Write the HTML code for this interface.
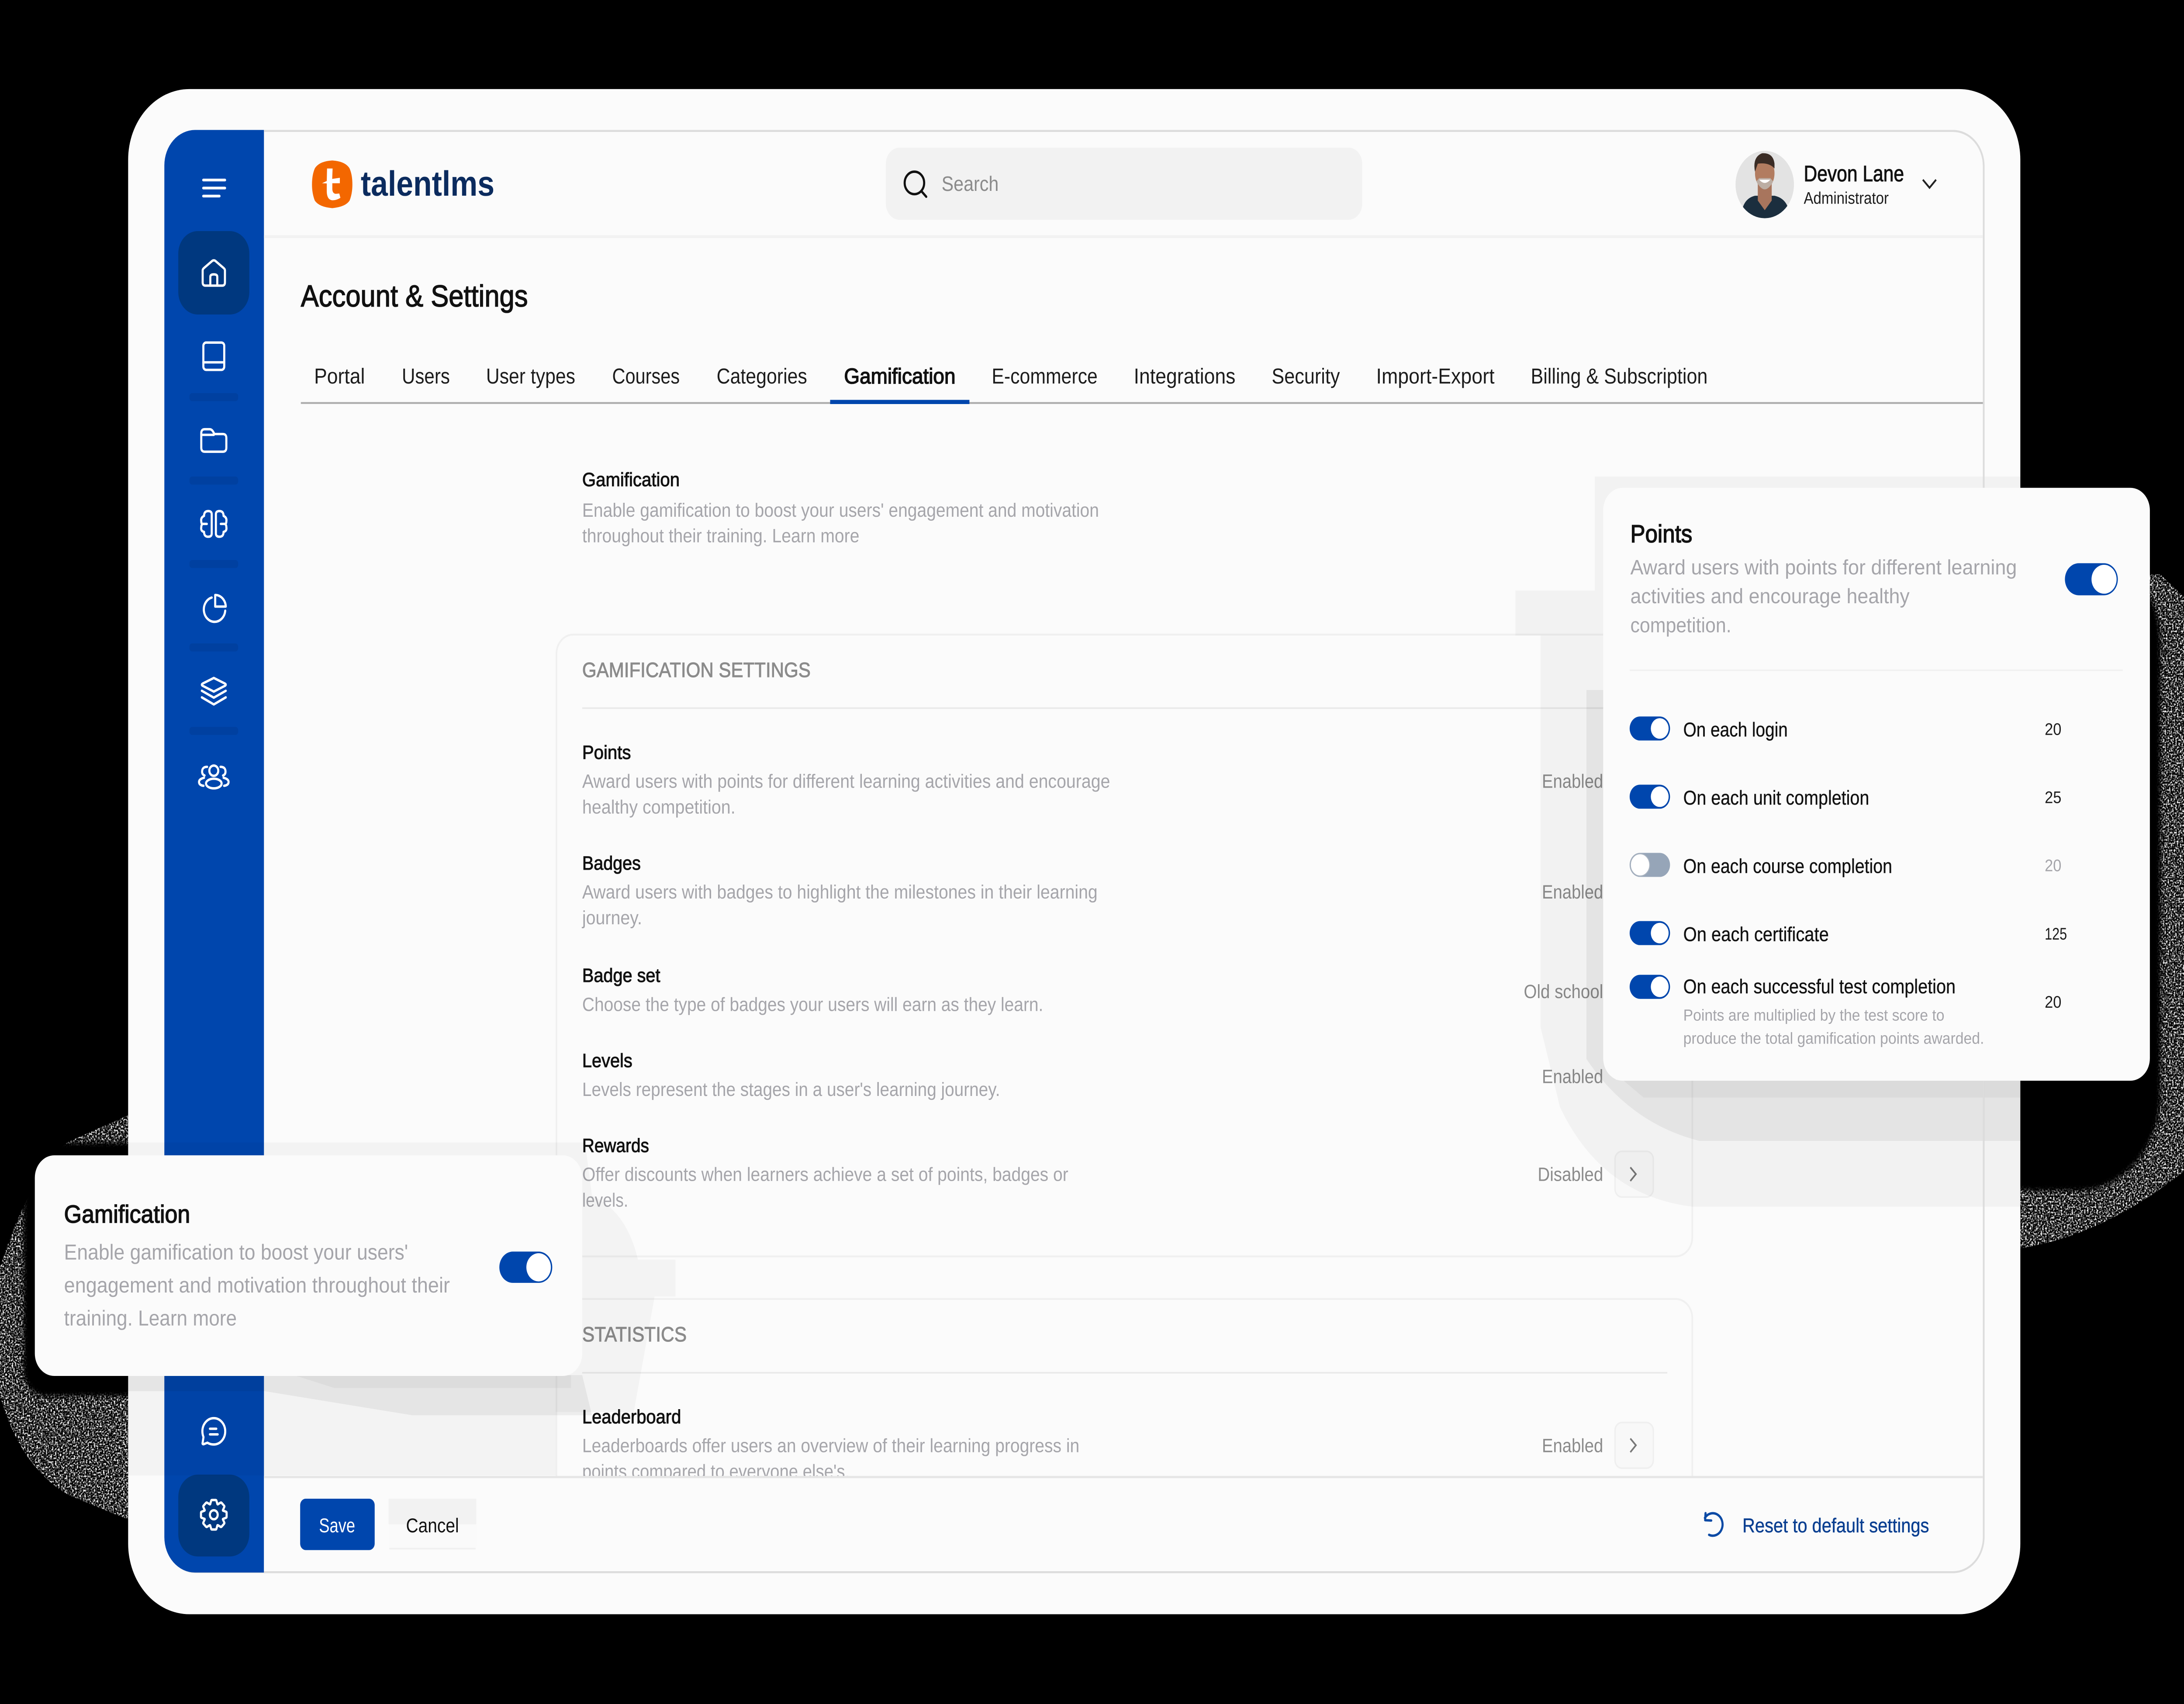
<!DOCTYPE html>
<html lang="en"><head><meta charset="utf-8"><title>TalentLMS Gamification Settings</title>
<style>
html,body{margin:0;padding:0;background:#000;width:100%;height:100%;overflow:hidden}
svg{display:block;position:absolute;left:0;top:0;width:100vw;height:100vh}
text{font-family:"Liberation Sans",sans-serif;fill:#1c1c1c;text-rendering:geometricPrecision;white-space:pre}
.m{stroke:#111;stroke-width:.3;fill:#111}
.t{stroke:#111;stroke-width:.45;fill:#111}
.d{fill:#a5a5aa}
.s{fill:#8b8b8b}
.h{fill:#8b8b8b;stroke:#8b8b8b;stroke-width:.3}
.ic{fill:none;stroke:#fff;stroke-width:1.5;stroke-linecap:round;stroke-linejoin:round}
</style></head><body>
<svg xmlns="http://www.w3.org/2000/svg" viewBox="0 0 1568 1061.94" preserveAspectRatio="none">
<defs>
<filter id="n" x="0" y="0" width="1" height="1" color-interpolation-filters="sRGB">
<feTurbulence type="fractalNoise" baseFrequency="0.9" numOctaves="2" seed="4" result="t"/>
<feColorMatrix in="t" type="matrix" values="3.5 0 0 0 -1.55  3.5 0 0 0 -1.55  3.5 0 0 0 -1.55  0 0 0 0 1" result="c"/>
<feComposite in="c" in2="SourceGraphic" operator="in"/>
</filter>
<filter id="b" x="-20%" y="-20%" width="140%" height="140%"><feGaussianBlur stdDeviation="1.5"/></filter>
<clipPath id="fr"><rect x="92" y="55.5" width="1358.5" height="950.5" rx="44"/></clipPath>
<clipPath id="av"><circle cx="1267" cy="115" r="21"/></clipPath>
<path id="t" d="M-2.6,-6.6 L-1.9,-8.7 Q-1.8,-9.2 -1.2,-9.2 H1.2 Q1.8,-9.2 1.9,-8.7 L2.6,-6.6 L2.9,-6.5"/>
</defs>

<rect width="1568" height="1061.94" fill="#000"/>

<!-- dithered glows -->
<path d="M92,695 L48,712 Q20,735 0,790 L0,870 Q15,915 50,932 L92,947 Z" fill="#fff" filter="url(#n)"/>
<path d="M1551,358 L1568,372 L1568,730 Q1510,770 1450,778 L1440,778 L1440,358 Z" fill="#fff" filter="url(#n)"/>
<rect x="17" y="712" width="110" height="158" rx="16" fill="#000" filter="url(#b)"/>
<rect x="1400" y="340" width="151" height="402" rx="60" fill="#000" filter="url(#b)"/>

<!-- device frame -->
<rect x="92" y="55.5" width="1358.5" height="950.5" rx="44" fill="#fbfbfb"/>
<rect x="118.6" y="81.6" width="1305.6" height="898.2" rx="22" fill="#fbfbfb" stroke="#dcdcdc" stroke-width="1.2"/>

<!-- sidebar -->
<path d="M189.5,81 H140 A22,22 0 0 0 118,103 V958 A22,22 0 0 0 140,980 H189.5 Z" fill="#0046ad"/>
<rect x="128" y="144" width="51" height="52" rx="14" fill="#00387f"/>
<rect x="128" y="919" width="51" height="51" rx="14" fill="#00387f"/>
<g fill="#0040a0">
<rect x="136" y="245" width="35" height="5" rx="2"/>
<rect x="136" y="297" width="35" height="5" rx="2"/>
<rect x="136" y="349" width="35" height="5" rx="2"/>
<rect x="136" y="401" width="35" height="5" rx="2"/>
<rect x="136" y="453" width="35" height="5" rx="2"/>
</g>

<!-- header -->
<rect x="189.5" y="146.6" width="1234" height="1.8" fill="#f2f2f2"/>
<path d="M226,105 Q229,100.5 238.5,100 Q248,100.5 251,105 Q253,109 253,115 Q253,120.5 251,125 Q248,129 238.5,129.7 Q229,129 226,125 Q224,120.5 224,115 Q224,109 226,105 Z" fill="#f36700"/>
<path d="M234.8,105 H238.8 L238.5,111.5 L244,110.8 V114.2 H238.6 V118 Q238.8,120.6 241,120.8 L243.6,120.6 L244.4,123.3 Q241,125 238.5,124.8 Q234.6,124.5 234.6,119 V114.3 L231.2,114.2 L234.6,112.8 Z" fill="#fff"/>
<text x="259" y="122" font-size="22" font-weight="700" textLength="96" lengthAdjust="spacingAndGlyphs" style="fill:#0b2b5e">talentlms</text>

<rect x="636" y="92" width="342" height="45" rx="10" fill="#f2f2f2"/>
<circle cx="656.5" cy="114" r="7" fill="none" stroke="#111" stroke-width="1.5"/>
<path d="M661.6,119.2 L665,122.6" stroke="#111" stroke-width="1.5" stroke-linecap="round"/>
<text x="676" y="119" font-size="13" class="s" textLength="41" lengthAdjust="spacingAndGlyphs">Search</text>

<g clip-path="url(#av)">
<circle cx="1267" cy="115" r="21" fill="#e3e3e3"/>
<path d="M1250,137 Q1250,124 1260,122 L1274,122 Q1285,124 1285,137 Z" fill="#1b2e3e"/>
<path d="M1262,112 H1272 V125 L1267,131 L1262,125 Z" fill="#a8755d"/>
<ellipse cx="1267" cy="108" rx="7" ry="9.5" fill="#b27c60"/>
<path d="M1260,107 Q1258,98 1265,95.5 Q1273,95 1274,102 L1274,105 Q1270,101 1262,102 Z" fill="#3a2c25"/>
<path d="M1261,113 Q1267,123 1273,113 L1271,111 H1263 Z" fill="#bcaea4"/>
<path d="M1263,112 Q1267,116 1271,112 Z" fill="#fff"/>
</g>
<text x="1295" y="113" font-size="14" class="m" textLength="72" lengthAdjust="spacingAndGlyphs">Devon Lane</text>
<text x="1295" y="127" font-size="10.5" textLength="61" lengthAdjust="spacingAndGlyphs">Administrator</text>
<path d="M1380.5,112 L1385.3,117 L1390,112" fill="none" stroke="#222" stroke-width="1.2"/>

<!-- title + tabs -->
<text x="216" y="191" font-size="19" class="t" textLength="163" lengthAdjust="spacingAndGlyphs">Account &amp; Settings</text>
<g font-size="13.5">
<text x="225.5" y="239" textLength="36.5" lengthAdjust="spacingAndGlyphs">Portal</text>
<text x="288.5" y="239" textLength="34.5" lengthAdjust="spacingAndGlyphs">Users</text>
<text x="349" y="239" textLength="64" lengthAdjust="spacingAndGlyphs">User types</text>
<text x="439.5" y="239" textLength="48.5" lengthAdjust="spacingAndGlyphs">Courses</text>
<text x="514.5" y="239" textLength="65" lengthAdjust="spacingAndGlyphs">Categories</text>
<text x="606" y="239" class="t" textLength="80" lengthAdjust="spacingAndGlyphs">Gamification</text>
<text x="712" y="239" textLength="76" lengthAdjust="spacingAndGlyphs">E-commerce</text>
<text x="814" y="239" textLength="73" lengthAdjust="spacingAndGlyphs">Integrations</text>
<text x="913" y="239" textLength="49" lengthAdjust="spacingAndGlyphs">Security</text>
<text x="988" y="239" textLength="85" lengthAdjust="spacingAndGlyphs">Import-Export</text>
<text x="1099" y="239" textLength="127" lengthAdjust="spacingAndGlyphs">Billing &amp; Subscription</text>
</g>
<rect x="216" y="250.6" width="1208" height="1.1" fill="#a9a9a9"/>
<rect x="596" y="249.2" width="100" height="2.6" fill="#0046ad"/>

<!-- gamification block -->
<text x="418" y="303" font-size="12" class="m" textLength="70" lengthAdjust="spacingAndGlyphs">Gamification</text>
<text x="418" y="322" font-size="12" class="d" textLength="371" lengthAdjust="spacingAndGlyphs">Enable gamification to boost your users' engagement and motivation</text>
<text x="418" y="338" font-size="12" class="d" textLength="199" lengthAdjust="spacingAndGlyphs">throughout their training. Learn more</text>

<!-- section cards -->
<rect x="399.5" y="395.5" width="815.5" height="387.5" rx="12" fill="none" stroke="#f0f0f0" stroke-width="1.2"/>
<rect x="399.5" y="809.5" width="815.5" height="140" rx="12" fill="none" stroke="#f0f0f0" stroke-width="1.2"/>
<text x="418" y="422" font-size="13" class="h" textLength="164" lengthAdjust="spacingAndGlyphs">GAMIFICATION SETTINGS</text>
<rect x="418" y="440.8" width="779" height="1" fill="#e9e9e9"/>

<text x="418" y="473" font-size="12" class="m" textLength="35" lengthAdjust="spacingAndGlyphs">Points</text>
<text x="418" y="491" font-size="12" class="d" textLength="379" lengthAdjust="spacingAndGlyphs">Award users with points for different learning activities and encourage</text>
<text x="418" y="507" font-size="12" class="d" textLength="110" lengthAdjust="spacingAndGlyphs">healthy competition.</text>
<text x="1107" y="491" font-size="12" class="s" textLength="44" lengthAdjust="spacingAndGlyphs">Enabled</text>

<text x="418" y="542" font-size="12" class="m" textLength="42" lengthAdjust="spacingAndGlyphs">Badges</text>
<text x="418" y="560" font-size="12" class="d" textLength="370" lengthAdjust="spacingAndGlyphs">Award users with badges to highlight the milestones in their learning</text>
<text x="418" y="576" font-size="12" class="d" textLength="43" lengthAdjust="spacingAndGlyphs">journey.</text>
<text x="1107" y="560" font-size="12" class="s" textLength="44" lengthAdjust="spacingAndGlyphs">Enabled</text>

<text x="418" y="612" font-size="12" class="m" textLength="56" lengthAdjust="spacingAndGlyphs">Badge set</text>
<text x="418" y="630" font-size="12" class="d" textLength="331" lengthAdjust="spacingAndGlyphs">Choose the type of badges your users will earn as they learn.</text>
<text x="1094" y="622" font-size="12" class="s" textLength="57" lengthAdjust="spacingAndGlyphs">Old school</text>

<text x="418" y="665" font-size="12" class="m" textLength="36" lengthAdjust="spacingAndGlyphs">Levels</text>
<text x="418" y="683" font-size="12" class="d" textLength="300" lengthAdjust="spacingAndGlyphs">Levels represent the stages in a user's learning journey.</text>
<text x="1107" y="675" font-size="12" class="s" textLength="44" lengthAdjust="spacingAndGlyphs">Enabled</text>

<text x="418" y="718" font-size="12" class="m" textLength="48" lengthAdjust="spacingAndGlyphs">Rewards</text>
<text x="418" y="736" font-size="12" class="d" textLength="349" lengthAdjust="spacingAndGlyphs">Offer discounts when learners achieve a set of points, badges or</text>
<text x="418" y="752" font-size="12" class="d" textLength="33" lengthAdjust="spacingAndGlyphs">levels.</text>
<text x="1104" y="736" font-size="12" class="s" textLength="47" lengthAdjust="spacingAndGlyphs">Disabled</text>
<rect x="1159.5" y="717.5" width="27.5" height="28.5" rx="5" fill="#f8f8f8" stroke="#efefef"/>
<path d="M1170.5,727.5 L1174.5,731.7 L1170.5,736" fill="none" stroke="#777" stroke-width="1.1"/>

<text x="418" y="836" font-size="13" class="h" textLength="75" lengthAdjust="spacingAndGlyphs">STATISTICS</text>
<rect x="418" y="855" width="779" height="1" fill="#e9e9e9"/>
<text x="418" y="887" font-size="12" class="m" textLength="71" lengthAdjust="spacingAndGlyphs">Leaderboard</text>
<text x="418" y="905" font-size="12" class="d" textLength="357" lengthAdjust="spacingAndGlyphs">Leaderboards offer users an overview of their learning progress in</text>
<text x="418" y="921" font-size="12" class="d" textLength="192" lengthAdjust="spacingAndGlyphs">points compared to everyone else's.</text>
<text x="1107" y="905" font-size="12" class="s" textLength="44" lengthAdjust="spacingAndGlyphs">Enabled</text>
<rect x="1159.5" y="886.5" width="27.5" height="28.5" rx="5" fill="#f8f8f8" stroke="#efefef"/>
<path d="M1170.5,896.5 L1174.5,900.7 L1170.5,905" fill="none" stroke="#777" stroke-width="1.1"/>

<!-- footer -->
<path d="M189.5,920 H1423.6 V958 A21,21 0 0 1 1402,979.2 H189.5 Z" fill="#fbfbfb"/>
<rect x="189.5" y="919.8" width="1234" height="1.4" fill="#e6e6e6"/>

<!-- shadows, clipped to device -->
<g clip-path="url(#fr)">
<path d="M1145,297 H1451 V752 H1215 Q1150,745 1120,690 L1106,640 V396 H1088 V368 H1145 Z" fill="#000" opacity=".036"/>
<path d="M1139,430 H1160 V673 H1451 V711 H1220 Q1170,700 1139,660 Z" fill="#000" opacity=".055"/>
<path d="M1165,673 H1451 V684 H1180 Z" fill="#000" opacity=".035"/>
<path d="M92,712 H420 L425,745 Q450,755 458,785 H485 V808 H470 L455,880 H399 V919.5 H92 Z" fill="#000" opacity=".03"/>
<path d="M92,857 H418 L425,882 H296 L190,867 H92 Z" fill="#000" opacity=".055"/>
<path d="M211,857 H410 V865 H240 Z" fill="#000" opacity=".035"/>
</g>

<!-- footer controls -->
<rect x="215.5" y="934" width="53.5" height="32" rx="4" fill="#0046ad"/>
<text x="229" y="955" font-size="12.5" textLength="26" lengthAdjust="spacingAndGlyphs" style="fill:#fff">Save</text>
<rect x="279" y="934" width="63" height="32" rx="3" fill="#fafafa"/>
<rect x="279" y="934" width="63" height="16" fill="#f2f2f2"/>
<rect x="279.5" y="964.6" width="62" height="1" fill="#f0f0f0"/>
<text x="291.5" y="955" font-size="12.5" textLength="38" lengthAdjust="spacingAndGlyphs" style="fill:#111">Cancel</text>
<path d="M1224,946 A7,7 0 1 1 1227,956.5" fill="none" stroke="#0b4aa5" stroke-width="1.5" stroke-linecap="round"/>
<path d="M1224.5,943 L1224.2,947.4 L1228.6,947.6" fill="none" stroke="#0b4aa5" stroke-width="1.5" stroke-linecap="round" stroke-linejoin="round"/>
<text x="1251" y="955" font-size="12.5" textLength="134" lengthAdjust="spacingAndGlyphs" style="fill:#0a3f91;stroke:#0a3f91;stroke-width:.15">Reset to default settings</text>

<!-- frame border redraw -->
<path d="M189.5,81.6 H1402 A22,22 0 0 1 1424.2,103.6 V958 A22,22 0 0 1 1402,979.8 H189.5" fill="none" stroke="#dcdcdc" stroke-width="1.2"/>

<!-- sidebar icons -->
<g class="ic">
<path d="M146,112.2 H161.5 M146,117.2 H161.5 M146,122.2 H157.5" stroke-width="1.7"/>
<g transform="translate(153.5,170)">
<path d="M-8,-1.5 Q-8,-2.3 -7,-3 L-1,-7.5 Q0,-8 1,-7.5 L7,-3 Q8,-2.3 8,-1.5 V6 Q8,8 6,8 H-6 Q-8,8 -8,6 Z"/>
<path d="M-2.5,8 V2.5 Q-2.5,1 0,1 Q2.5,1 2.5,2.5 V8"/>
</g>
<g transform="translate(153.5,222)">
<rect x="-7.5" y="-8.5" width="15" height="17" rx="2"/>
<path d="M-7.5,3.8 H7.5"/>
</g>
<g transform="translate(153.5,274.5)">
<path d="M-9,-3.5 V-4.5 Q-9,-7 -6.5,-7 H-3 Q-1.5,-7 -0.5,-5.5 L0.5,-4 H6.5 Q9,-4 9,-1.5 V4.5 Q9,7 6.5,7 H-6.5 Q-9,7 -9,4.5 Z"/>
<path d="M-9,-3.5 H0"/>
</g>
<g transform="translate(153.5,326.5)">
<path d="M-1.5,-6 Q-1.5,-8 -4,-8 Q-7,-8 -7,-5 Q-9.5,-4 -9,-1.5 Q-9,0 -8,0 Q-9,0.5 -9,2 Q-9.5,4.5 -7,5 Q-7,8 -4,8 Q-1.5,8 -1.5,6 Z"/>
<path d="M1.5,-6 Q1.5,-8 4,-8 Q7,-8 7,-5 Q9.5,-4 9,-1.5 Q9,0 8,0 Q9,0.5 9,2 Q9.5,4.5 7,5 Q7,8 4,8 Q1.5,8 1.5,6 Z"/>
<path d="M-8,0 H-5 M8,0 H5"/>
</g>
<g transform="translate(153.5,379)">
<path d="M-1.5,-6.6 A7.7,7.7 0 1 0 8.2,1.6"/>
<path d="M1,-8.2 A7.6,7.6 0 0 1 8.6,-1 H1 Z"/>
</g>
<g transform="translate(153.5,431)">
<path d="M0,-8.5 L8,-5 Q9.2,-4.3 8,-3.6 L0,0 L-8,-3.6 Q-9.2,-4.3 -8,-5 Z"/>
<path d="M-8.6,-0.5 L0,3.8 L8.6,-0.5"/>
<path d="M-8.6,3.6 L0,8 L8.6,3.6"/>
</g>
<g transform="translate(153.5,483.5)">
<circle cx="0" cy="-3.2" r="3.2"/>
<ellipse cx="0" cy="4.8" rx="5.6" ry="3"/>
<path d="M-4.8,-5.6 Q-8.4,-5.6 -8.4,-2.6 Q-8.4,-0.8 -6.6,-0.2"/>
<path d="M4.8,-5.6 Q8.4,-5.6 8.4,-2.6 Q8.4,-0.8 6.6,-0.2"/>
<path d="M-7,1.2 Q-10.6,2 -10.6,3.8 Q-10.6,5.8 -7.4,6.2"/>
<path d="M7,1.2 Q10.6,2 10.6,3.8 Q10.6,5.8 7.4,6.2"/>
</g>
<g transform="translate(153.5,892)">
<path d="M0,-8.2 A8.2,8.2 0 0 1 0,8.2 Q-2.6,8.2 -4.6,7.1 L-7.2,8 Q-8.4,8.2 -8,7 L-7.4,3.6 Q-8.2,1.8 -8.2,0 A8.2,8.2 0 0 1 0,-8.2 Z"/>
<path d="M-2.8,-1.6 H1.8 M-2.8,1.9 H2.8"/>
</g>
<g transform="translate(153.5,944)">
<use href="#t"/><use href="#t" transform="rotate(45)"/><use href="#t" transform="rotate(90)"/><use href="#t" transform="rotate(135)"/><use href="#t" transform="rotate(180)"/><use href="#t" transform="rotate(225)"/><use href="#t" transform="rotate(270)"/><use href="#t" transform="rotate(315)"/>
<circle r="2.8"/>
</g>
</g>

<!-- Points card -->
<rect x="1151" y="304" width="392.5" height="369.5" rx="14" fill="#fbfbfb"/>
<text x="1170.5" y="338" font-size="15.5" class="t" textLength="44.5" lengthAdjust="spacingAndGlyphs">Points</text>
<text x="1170.5" y="358" font-size="13" class="d" textLength="277.5" lengthAdjust="spacingAndGlyphs">Award users with points for different learning</text>
<text x="1170.5" y="376" font-size="13" class="d" textLength="200.5" lengthAdjust="spacingAndGlyphs">activities and encourage healthy</text>
<text x="1170.5" y="394" font-size="13" class="d" textLength="72.5" lengthAdjust="spacingAndGlyphs">competition.</text>
<rect x="1482.5" y="351" width="38" height="20" rx="10" fill="#0046ad"/>
<circle cx="1510.6" cy="361" r="9" fill="#fff"/>
<rect x="1170" y="417.2" width="354" height="1" fill="#f1f1f1"/>

<rect x="1170" y="446.5" width="29" height="15" rx="7.5" fill="#0046ad"/><circle cx="1191.6" cy="454" r="6.4" fill="#fff"/>
<rect x="1170" y="489" width="29" height="15" rx="7.5" fill="#0046ad"/><circle cx="1191.6" cy="496.5" r="6.4" fill="#fff"/>
<rect x="1170" y="531.5" width="29" height="15" rx="7.5" fill="#96a5b8"/><circle cx="1177.5" cy="539" r="6.9" fill="#fff" stroke="#a9b3c0" stroke-width=".6"/>
<rect x="1170" y="574" width="29" height="15" rx="7.5" fill="#0046ad"/><circle cx="1191.6" cy="581.5" r="6.4" fill="#fff"/>
<rect x="1170" y="607.5" width="29" height="15" rx="7.5" fill="#0046ad"/><circle cx="1191.6" cy="615" r="6.4" fill="#fff"/>

<g font-size="12.5">
<text x="1208.5" y="459" class="m" style="stroke-width:.12" textLength="75" lengthAdjust="spacingAndGlyphs">On each login</text>
<text x="1208.5" y="501.5" class="m" style="stroke-width:.12" textLength="133.5" lengthAdjust="spacingAndGlyphs">On each unit completion</text>
<text x="1208.5" y="544" class="m" style="stroke-width:.12" textLength="150" lengthAdjust="spacingAndGlyphs">On each course completion</text>
<text x="1208.5" y="586.5" class="m" style="stroke-width:.12" textLength="104.5" lengthAdjust="spacingAndGlyphs">On each certificate</text>
<text x="1208.5" y="619" class="m" style="stroke-width:.12" textLength="195.5" lengthAdjust="spacingAndGlyphs">On each successful test completion</text>
</g>
<text x="1208.5" y="636" font-size="10" class="d" textLength="187.5" lengthAdjust="spacingAndGlyphs">Points are multiplied by the test score to</text>
<text x="1208.5" y="650.5" font-size="10" class="d" textLength="216" lengthAdjust="spacingAndGlyphs">produce the total gamification points awarded.</text>
<g font-size="10.5">
<text x="1468" y="458" textLength="12" lengthAdjust="spacingAndGlyphs">20</text>
<text x="1468" y="500.5" textLength="12" lengthAdjust="spacingAndGlyphs">25</text>
<text x="1468" y="543" class="d" textLength="12" lengthAdjust="spacingAndGlyphs">20</text>
<text x="1468" y="585.5" textLength="16" lengthAdjust="spacingAndGlyphs">125</text>
<text x="1468" y="628" textLength="12" lengthAdjust="spacingAndGlyphs">20</text>
</g>

<!-- Gamification card -->
<rect x="25" y="720" width="393" height="137.5" rx="14" fill="#fbfbfb"/>
<text x="46" y="762" font-size="15.5" class="t" textLength="90.5" lengthAdjust="spacingAndGlyphs">Gamification</text>
<text x="46" y="785" font-size="13.5" class="d" textLength="247" lengthAdjust="spacingAndGlyphs">Enable gamification to boost your users'</text>
<text x="46" y="805.5" font-size="13.5" class="d" textLength="277" lengthAdjust="spacingAndGlyphs">engagement and motivation throughout their</text>
<text x="46" y="826" font-size="13.5" class="d" textLength="124" lengthAdjust="spacingAndGlyphs">training. Learn more</text>
<rect x="358.5" y="780" width="38" height="19.5" rx="9.75" fill="#0046ad"/>
<circle cx="386.7" cy="789.8" r="8.8" fill="#fff"/>
</svg>
</body></html>
